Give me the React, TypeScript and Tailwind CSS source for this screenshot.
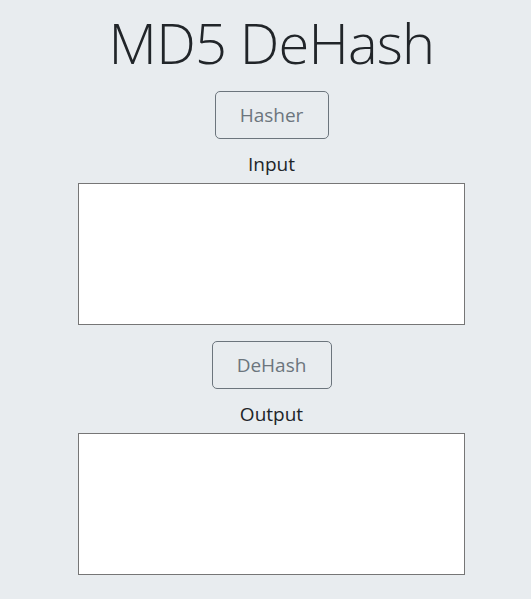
export default function App() {
  return (
    <div
      className="min-h-[599px] w-full bg-[#e8ecef] flex flex-col items-center pl-[12px] text-[#212529]"
      style={{ fontFamily: '"Open Sans", "Noto Sans", sans-serif' }}
    >
      <h1 className="mt-[4px] text-[56px] leading-[76px] font-light tracking-[-0.8px]">MD5 DeHash</h1>
      <button className="mt-[11px] w-[114px] h-[48px] border border-[#6c757d] rounded-[5px] text-[#6c757d] text-[19px] leading-none">
        Hasher
      </button>
      <div className="mt-[11px] text-[19px] leading-[28px]">Input</div>
      <textarea className="mt-[5px] w-[387px] h-[142px] bg-white border border-[#767676] resize-none block" />
      <button className="mt-[16px] w-[120px] h-[48px] border border-[#6c757d] rounded-[5px] text-[#6c757d] text-[19px] leading-none">
        DeHash
      </button>
      <div className="mt-[11px] text-[19px] leading-[28px]">Output</div>
      <textarea className="mt-[5px] w-[387px] h-[142px] bg-white border border-[#767676] resize-none block" />
    </div>
  );
}
